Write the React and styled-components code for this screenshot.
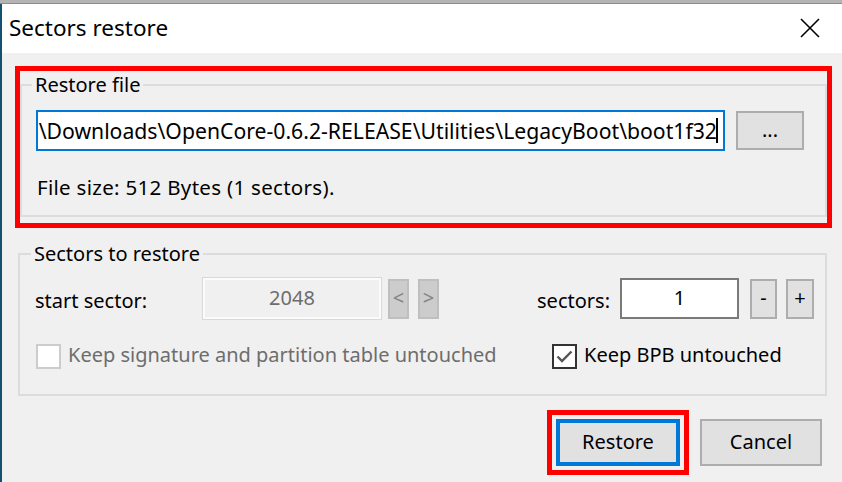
import React from "react";
import styled, { createGlobalStyle } from "styled-components";

const GlobalStyle = createGlobalStyle`
  html, body {
    margin: 0;
    padding: 0;
    overflow: hidden;
    background: #f0f0f0;
  }
  * {
    box-sizing: border-box;
  }
`;

const PATH =
  "D:\\Downloads\\OpenCore-0.6.2-RELEASE\\Utilities\\LegacyBoot\\boot1f32";

function App() {
  return (
    <>
      <GlobalStyle />
      <Screen>
        <BehindStrip />
        <Main>
          <DesktopEdge />
          <Dialog>
            <TitleBar>
              <Title>Sectors restore</Title>
              <CloseButton>
                <svg width="20" height="20" viewBox="0 0 20 20">
                  <path
                    d="M1 1 L19 19 M19 1 L1 19"
                    stroke="#000"
                    strokeWidth="1.6"
                    fill="none"
                  />
                </svg>
              </CloseButton>
            </TitleBar>

            <Body>
              <Highlight>
                <GroupBox>
                  <Legend>Restore file</Legend>
                  <Row>
                    <PathField>
                      <PathText>{PATH}</PathText>
                      <Caret />
                    </PathField>
                    <Button $w={68} $h={39}>
                      ...
                    </Button>
                  </Row>
                  <Info>File size: 512 Bytes (1 sectors).</Info>
                </GroupBox>
              </Highlight>

              <SecondGroup>
                <Legend>Sectors to restore</Legend>
                <Row>
                  <Label $w={168}>start sector:</Label>
                  <NumberField $w={178} disabled>
                    2048
                  </NumberField>
                  <ArrowButton>&lt;</ArrowButton>
                  <ArrowButton $gap={9}>&gt;</ArrowButton>
                  <Spacer />
                  <Label>sectors:</Label>
                  <NumberField $w={119}>1</NumberField>
                  <Button $w={27} $h={40} $gap={11}>
                    -
                  </Button>
                  <Button $w={28} $h={40} $gap={9}>
                    +
                  </Button>
                </Row>
                <CheckRow>
                  <Check>
                    <Box disabled />
                    <CheckText disabled>
                      Keep signature and partition table untouched
                    </CheckText>
                  </Check>
                  <Check>
                    <Box>
                      <svg width="21" height="21" viewBox="0 0 21 21">
                        <path
                          d="M3.5 10.5 L8 15 L17.5 5.5"
                          stroke="#555"
                          strokeWidth="2.4"
                          fill="none"
                        />
                      </svg>
                    </Box>
                    <CheckText>Keep BPB untouched</CheckText>
                  </Check>
                </CheckRow>
              </SecondGroup>

              <ButtonRow>
                <FocusMark>
                  <Button $w={124} $h={47} $primary>
                    Restore
                  </Button>
                </FocusMark>
                <Button $w={122} $h={47}>
                  Cancel
                </Button>
              </ButtonRow>
            </Body>
          </Dialog>
        </Main>
      </Screen>
    </>
  );
}

export default App;

const Screen = styled.div`
  width: 842px;
  height: 482px;
  display: flex;
  flex-direction: column;
  font-family: "Noto Sans", "Open Sans", sans-serif;
  font-size: 20px;
  color: #000;
  overflow: hidden;
`;

const BehindStrip = styled.div`
  height: 4px;
  background: #b4b4b4;
  border-bottom: 1px solid #8c8c8c;
`;

const Main = styled.div`
  flex: 1;
  display: flex;
  min-width: 0;
`;

const DesktopEdge = styled.div`
  width: 2px;
  flex-shrink: 0;
  background: #14506f;
`;

const Dialog = styled.div`
  flex: 1;
  min-width: 0;
  display: flex;
  flex-direction: column;
  background: #f0f0f0;
`;

const TitleBar = styled.div`
  height: 49px;
  background: #fff;
  display: flex;
  align-items: center;
  padding: 0 22px 0 7px;
`;

const Title = styled.div`
  flex: 1;
  font-size: 22.5px;
  padding-bottom: 2px;
`;

const CloseButton = styled.div`
  width: 20px;
  height: 20px;
  display: flex;
  margin-bottom: 2px;
`;

const Body = styled.div`
  flex: 1;
  min-width: 0;
  display: flex;
  flex-direction: column;
  padding: 13px 10px 0 13px;
`;

const Highlight = styled.div`
  border: 5px solid #ff0000;
  padding-bottom: 6px;
  min-width: 0;
`;

const GroupBox = styled.fieldset`
  margin: 0;
  border: 2px solid #dcdcdc;
  padding: 11px 21px 15px 14px;
  min-width: 0;
`;

const SecondGroup = styled(GroupBox)`
  margin: 12px 5px 0 3px;
  padding: 10px 11px 24px 15px;
`;

const Legend = styled.legend`
  margin-left: -4px;
  padding: 0 3px;
  height: 28px;
  line-height: 28px;
`;

const Row = styled.div`
  display: flex;
  align-items: center;
  min-width: 0;
`;

const PathField = styled.div`
  flex: 1;
  min-width: 0;
  height: 41px;
  border: 2px solid #0078d7;
  background: #fff;
  display: flex;
  align-items: center;
  justify-content: flex-end;
  overflow: hidden;
  padding-right: 5px;
  white-space: nowrap;
  font-size: 21.2px;
`;

const PathText = styled.span`
  flex-shrink: 0;
`;

const Caret = styled.span`
  flex-shrink: 0;
  width: 2px;
  height: 25px;
  margin-left: -1px;
  background: #000;
`;

const Button = styled.div`
  width: ${(p) => p.$w}px;
  height: ${(p) => p.$h}px;
  margin-left: ${(p) => (p.$gap !== undefined ? p.$gap : 11)}px;
  flex-shrink: 0;
  display: flex;
  align-items: center;
  justify-content: center;
  background: #e1e1e1;
  border: ${(p) => (p.$primary ? "4px solid #0078d7" : "2px solid #adadad")};
  line-height: 1;
  padding-bottom: 2px;
`;

const Info = styled.div`
  margin-top: 23px;
  line-height: 26px;
  padding-left: 1px;
  font-size: 20.5px;
  letter-spacing: 0.3px;
`;

const Label = styled.div`
  width: ${(p) => (p.$w ? `${p.$w}px` : "auto")};
  flex-shrink: 0;
  padding-top: 4px;
  margin-right: ${(p) => (p.$w ? 0 : 10)}px;
`;

const NumberField = styled.div`
  width: ${(p) => p.$w}px;
  height: 41px;
  flex-shrink: 0;
  display: flex;
  align-items: center;
  justify-content: center;
  padding-bottom: 3px;
  background: ${(p) => (p.disabled ? "#f0f0f0" : "#fff")};
  border: 2px solid ${(p) => (p.disabled ? "#fbfbfb" : "#7a7a7a")};
  box-shadow: ${(p) => (p.disabled ? "0 0 0 1px #d9d9d9" : "none")};
  color: ${(p) => (p.disabled ? "#6d6d6d" : "#000")};
`;

const ArrowButton = styled.div`
  width: 21px;
  height: 40px;
  margin-left: ${(p) => p.$gap || 7}px;
  flex-shrink: 0;
  display: flex;
  align-items: center;
  justify-content: center;
  background: #cccccc;
  border: 2px solid #bfbfbf;
  color: #838383;
  padding-bottom: 3px;
`;

const Spacer = styled.div`
  flex: 1;
`;

const CheckRow = styled.div`
  display: flex;
  align-items: center;
  margin-top: 23px;
  padding-left: 1px;
`;

const Check = styled.div`
  display: flex;
  align-items: center;
  gap: 7px;
  &:first-child {
    width: 516px;
  }
`;

const Box = styled.div`
  width: 25px;
  height: 25px;
  flex-shrink: 0;
  background: #fff;
  border: 2px solid ${(p) => (p.disabled ? "#cccccc" : "#333333")};
  display: flex;
`;

const CheckText = styled.span`
  color: ${(p) => (p.disabled ? "#6d6d6d" : "#000")};
  line-height: 26px;
  padding-bottom: 2px;
`;

const ButtonRow = styled.div`
  display: flex;
  align-items: center;
  justify-content: flex-end;
  margin-top: 14px;
  padding-right: 10px;
`;

const FocusMark = styled.div`
  border: 5px solid #ff0000;
  padding: 4px;
  background: #f0f0f0;
  display: flex;
  & > div {
    margin-left: 0;
  }
`;
